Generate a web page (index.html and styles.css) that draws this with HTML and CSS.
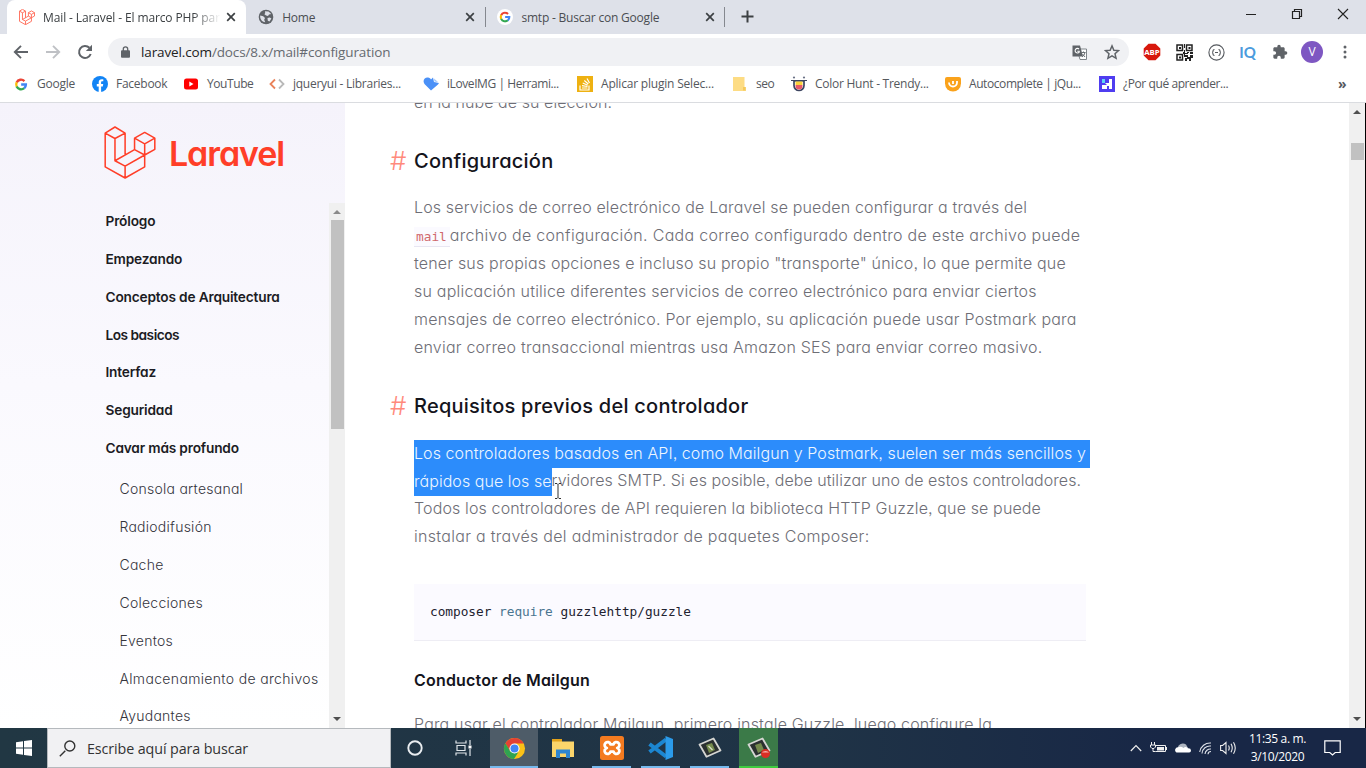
FILE: index.html
```html
<!DOCTYPE html>
<html lang="es">
<head>
<meta charset="utf-8">
<title>Mail - Laravel</title>
<link rel="stylesheet" href="styles.css">
</head>
<body>
<svg class="defs" width="0" height="0">
  <symbol id="g" viewBox="0 0 24 24"><path fill="none" stroke="#ea4335" stroke-width="4.4" d="M4 8.2A9 9 0 0 1 18.3 5.6"/><path fill="none" stroke="#fbbc05" stroke-width="4.4" d="M4.1 16a9 9 0 0 1 0-8"/><path fill="none" stroke="#34a853" stroke-width="4.4" d="M4 15.8a9 9 0 0 0 14 3"/><path fill="none" stroke="#4285f4" stroke-width="4.4" d="M12.3 12.1h8.8a9 9 0 0 1-3.2 6.8"/></symbol>
  <symbol id="lara" viewBox="43 49 153 157"><path fill="none" stroke="currentColor" stroke-linejoin="round" d="M75 52l30 18-30 16-29-16zM46 70v100l59 33 58-33v-35M75 86v66l30 16v35M105 70v65M75 152l58-33M105 168l58-33M163 68l30 17-30 17-30-17zM133 85v34l30 16 30-17V85M163 102v33"/></symbol>
  <symbol id="x" viewBox="0 0 10 10"><path stroke="#3c4043" stroke-width="1.7" d="M1.2 1.2l7.6 7.6M8.8 1.2L1.2 8.8"/></symbol>
</svg>
<div class="screen">
  <header class="tabs">
    <div class="tab active"><svg class="fav lara-fav"><use href="#lara"/></svg><span class="tt fade">Mail - Laravel - El marco PHP par</span><svg class="close"><use href="#x"/></svg></div>
    <div class="tab"><svg class="fav" viewBox="0 0 16 16"><circle cx="8" cy="8" r="7.300" fill="#5f6368"/><path fill="#dee1e9" d="M2.2 6.500l3 .8 1.800 1.800-.8 1.700 1 2.500C4 13 1.800 10 2.200 6.500zM7 2.300l3.500.3 2.700 2.400-2.200.4-1 1.600-1.900-.4-1.700-1.300.8-1.400zM9.500 9l2.300-.5 1.600 1.100-1.900 2.800-1.700-.6z"/></svg><span class="tt">Home</span><svg class="close"><use href="#x"/></svg></div>
    <div class="tab bar"><svg class="fav" viewBox="0 0 18 18"><circle cx="9" cy="9" r="9" fill="#fff"/><use href="#g" x="2.500" y="2.500" width="13" height="13"/></svg><span class="tt">smtp - Buscar con Google</span><svg class="close"><use href="#x"/></svg></div>
    <div class="newtab"><svg width="13" height="13" viewBox="0 0 13 13"><path stroke="#3c4043" stroke-width="2" d="M6.500 .5v12M.5 6.500h12"/></svg></div>
    <div class="winbtns">
      <svg width="12" height="12" viewBox="0 0 12 12"><path stroke="#222" d="M1 6.500h10"/></svg>
      <svg width="12" height="12" viewBox="0 0 12 12"><path fill="none" stroke="#222" stroke-width="1.200" d="M1.500 3.500h7v7h-7zM3.500 3.500v-2h7v7h-2"/></svg>
      <svg width="12" height="12" viewBox="0 0 12 12"><path stroke="#222" stroke-width="1.100" d="M1 1l10 10M11 1L1 11"/></svg>
    </div>
  </header>
  <div class="toolbar">
    <svg class="nav" viewBox="0 0 16 16"><path fill="none" stroke="#5f6368" stroke-width="1.900" d="M15 8H2M8 1.800L1.800 8 8 14.200"/></svg>
    <svg class="nav" viewBox="0 0 16 16"><path fill="none" stroke="#bfc1c5" stroke-width="1.900" d="M1 8h13M8 1.800L14.200 8 8 14.200"/></svg>
    <svg class="nav" viewBox="0 0 16 16"><path fill="none" stroke="#5f6368" stroke-width="2" d="M13.700 10A6 6 0 1 1 12.400 3.800"/><path fill="#5f6368" d="M15 .8v6.200H8.800z"/></svg>
    <div class="omni">
      <svg class="lock" viewBox="0 0 9 12"><path fill="none" stroke="#5f6368" stroke-width="1.300" d="M2.300 5V3a2.200 2.200 0 0 1 4.400 0v2"/><rect y="4.300" width="9" height="7.400" rx="1" fill="#5f6368"/></svg>
      <span class="url"><b>laravel.com</b>/docs/8.x/mail#configuration</span>
      <svg class="trans" viewBox="0 0 15 15"><path fill="#fff" stroke="#80868b" d="M5 4h9.500v10.500H8z"/><path fill="#5f6368" d="M.5 .5h7.500L11 11.500H.5z"/><path fill="none" stroke="#fff" stroke-width="1.100" d="M7 4a2.300 2.300 0 1 0 .2 3.200V6.200H5.300"/><path fill="none" stroke="#6b7075" d="M9.500 7.500h4M11.500 6.500v1M13 7.500q-.5 3-3 4.500M10.500 9l2.500 3"/></svg>
      <svg class="star" viewBox="0 0 24 24"><path fill="none" stroke="#5f6368" stroke-width="2.200" d="M12 2.800l2.800 6.500 7 .6-5.300 4.600 1.600 6.900L12 17.700l-6.100 3.700 1.600-6.900L2.200 9.900l7-.6z"/></svg>
    </div>
    <div class="exts">
      <svg width="18" height="18" viewBox="0 0 18 18"><path fill="#d8180d" d="M5.500 .7h7l4.800 4.800v7l-4.800 4.800h-7L.7 12.500v-7z"/><text x="9" y="12" font-size="7.800" font-weight="700" fill="#fff" text-anchor="middle">ABP</text></svg>
      <svg width="17" height="17" viewBox="0 0 17 17"><path fill="none" stroke="#222" stroke-width="1.500" d="M1 1h5.500v5.500H1zM10.500 1H16v5.500h-5.500zM1 10.500h5.500V16H1z"/><path fill="#222" d="M3 3h2v2H3zM12.500 3h2v2h-2zM3 12.500h2v2H3zM8 0h1v4H8zM8 6h1v3h3v1H9v3H8v-3H7V8h1zM11 8h2v1h-2zM14 8h3v2h-3zM9 11h3v2h2v-2h3v3h-2v3h-2v-2h-2v2H9v-3h2v-1H9z"/></svg>
      <svg width="17" height="17" viewBox="0 0 17 17"><circle cx="8.500" cy="8.500" r="7.600" fill="none" stroke="#55595e" stroke-width="1.100"/><path fill="none" stroke="#55595e" stroke-width="1.200" d="M6.500 5.500q-1.500 0-1.500 1.500T4 8.500q1 0 1 1.500t1.500 1.500M10.500 5.500q1.500 0 1.500 1.500t1 1.500q-1 0-1 1.500t-1.500 1.500M7 8.500h3"/></svg>
      <span class="iq">IQ</span>
      <svg width="16" height="16" viewBox="0 0 24 24"><path fill="#5f6368" d="M20.500 11H19V7c0-1.100-.9-2-2-2h-4V3.500a2.500 2.500 0 0 0-5 0V5H4c-1.100 0-2 .9-2 2v3.800h1.500a2.700 2.700 0 0 1 0 5.400H2V20c0 1.100.9 2 2 2h3.800v-1.500a2.700 2.700 0 0 1 5.400 0V22H17c1.100 0 2-.9 2-2v-4h1.500a2.500 2.500 0 0 0 0-5z"/></svg>
      <span class="avatar">V</span>
      <svg width="4" height="14" viewBox="0 0 4 14"><g fill="#5f6368"><circle cx="2" cy="2" r="1.500"/><circle cx="2" cy="7" r="1.500"/><circle cx="2" cy="12" r="1.500"/></g></svg>
    </div>
  </div>
  <nav class="marks">
    <a><svg viewBox="0 0 16 16"><use href="#g" x="1.500" y="2" width="13" height="13"/></svg>Google</a>
    <a><svg viewBox="0 0 16 16"><circle cx="8" cy="8" r="8" fill="#1284f5"/><path fill="#fff" d="M6.700 16v-5.500H4.800V8h1.900V6.300c0-2 1.200-3.100 3-3.100.8 0 1.600.1 1.600.1v2h-1c-.9 0-1.200.5-1.200 1.200V8h2.100l-.4 2.500H9.100V16z"/></svg>Facebook</a>
    <a class="t2"><svg viewBox="0 0 16 16"><rect x="1" y="2.500" width="14" height="11" rx="2.500" fill="#f00"/><path fill="#fff" d="M6.300 5.500v5L10.500 8z"/></svg>YouTube</a>
    <a><svg viewBox="0 0 16 16"><path fill="none" stroke="#e9825a" stroke-width="1.800" d="M6 3.500L1.500 8 6 12.500"/><path fill="none" stroke="#b9b9b9" stroke-width="1.800" d="M10 3.500L14.500 8 10 12.500"/></svg>jqueryui - Libraries...</a>
    <a class="t2"><svg viewBox="0 0 16 16"><path fill="#4a90f7" d="M8 14.500L1.500 8C-1 4.500 2 1 5 1.500c1.500.2 2.500 1 3 2L10 1.500l1 4.500 5 1-1 1.500z"/><path fill="#9dc4fb" d="M11 2.500l4 3.500-3.500-.5z"/></svg>iLoveIMG | Herrami...</a>
    <a class="t0"><svg viewBox="0 0 16 16"><path fill="#eeb111" d="M0 0h16v16H0z"/><path fill="none" stroke="#fff" stroke-width="1.200" d="M3 9.500V14h9V9.500M5 12h5.500M5 9.700l5.500.8M5.700 7l5 2.300M7.300 4.500l4 3.500M10 2.500l2.500 4.500"/></svg>Aplicar plugin Selec...</a>
    <a class="t2"><svg viewBox="0 0 16 16"><path fill="#fddc84" d="M1 1h11.500v10H14v4H1z"/><path fill="#f5c95b" d="M11 11h2.500v3.500H11z"/></svg>seo</a>
    <a><svg viewBox="0 0 16 16"><path fill="#fff" stroke="#3c4560" stroke-width="1.700" d="M3 5h10v4.500a5 5 0 0 1-10 0z"/><path fill="#fbd23b" d="M4.500 5.500h7V9h-7z"/><path fill="#e95a67" d="M4.500 9h7v1a3.500 3.500 0 0 1-7 0z"/><path stroke="#3c4560" d="M0 4.500h16"/><circle cx="3" cy="1.500" r="1.100" fill="#6a7186"/><circle cx="13" cy="1.500" r="1.100" fill="#6a7186"/></svg>Color Hunt - Trendy...</a>
    <a class="t2"><svg viewBox="0 0 16 16"><path fill="#faa21b" d="M2 1h12q2 0 2 2v4.500A8 8 0 0 1 0 7.500V3q0-2 2-2z"/><path fill="none" stroke="#fff" stroke-width="1.800" d="M4 6.500a4 4 0 0 0 8 0V5M8 8V5"/></svg>Autocomplete | jQu...</a>
    <a class="t2"><svg viewBox="0 0 16 16"><path fill="#4f3df0" d="M0 0h16v16H0z"/><path fill="#fff" d="M3 9h3v4H3zM6 7h4V3h3v10h-3v-3H8v3H6V9h2z"/><path fill="#5fd5f5" d="M3 3h3v4H3z"/></svg>¿Por qué aprender...</a>
    <b class="more">»</b>
  </nav>
  <main class="page">
    <aside class="side">
      <div class="brand"><svg class="logo"><use href="#lara"/></svg><span class="word">Laravel</span></div>
      <div class="toc">
        <ul>
          <li>Prólogo</li><li>Empezando</li><li>Conceptos de Arquitectura</li><li class="tight">Los basicos</li><li>Interfaz</li><li>Seguridad</li><li>Cavar más profundo
            <ul class="sub"><li>Consola artesanal</li><li>Radiodifusión</li><li>Cache</li><li>Colecciones</li><li>Eventos</li><li class="wide">Almacenamiento de archivos</li><li>Ayudantes</li></ul>
          </li>
        </ul>
        <div class="sb"><i class="up"></i><i class="thumb"></i><i class="down"></i></div>
      </div>
    </aside>
    <article class="doc">
      <p class="first">en la nube de su elección.</p>
      <h2><i>#</i>Configuración</h2>
      <p><span class="s15">Los servicios de correo electrónico de Laravel se pueden configurar a través del</span><br><code>mail</code><span class="s30">archivo de configuración. Cada correo configurado dentro de este archivo puede</span><br><span class="s18">tener sus propias opciones e incluso su propio "transporte" único, lo que permite que</span><br><span class="s21">su aplicación utilice diferentes servicios de correo electrónico para enviar ciertos</span><br><span class="s22">mensajes de correo electrónico. Por ejemplo, su aplicación puede usar Postmark para</span><br><span class="s21">enviar correo transaccional mientras usa Amazon SES para enviar correo masivo.</span></p>
      <h2><i>#</i>Requisitos previos del controlador</h2>
      <p><span class="sel full s08">Los controladores basados en API, como Mailgun y Postmark, suelen ser más sencillos y</span><br><span class="s05"><span class="sel">rápidos que los se</span>rvidores SMTP. Si es posible, debe utilizar uno de estos controladores.</span><br><span class="s13">Todos los controladores de API requieren la biblioteca HTTP Guzzle, que se puede</span><br><span class="s30">instalar a través del administrador de paquetes Composer:</span></p>
      <pre>composer <em>require</em> guzzlehttp/guzzle</pre>
      <h3>Conductor de Mailgun</h3>
      <p><span class="s18">Para usar el controlador Mailgun, primero instale Guzzle, luego configure la</span></p>
      <svg class="caret" width="8" height="16" viewBox="0 0 8 16"><path fill="none" stroke="#333" d="M1 .5h2l1 1 1-1h2M4 1.500v13M1 15.500h2l1-1 1 1h2"/></svg>
    </article>
    <div class="sb main"><i class="up"></i><i class="thumb"></i><i class="down"></i></div>
  </main>
  <footer class="task">
    <div class="start"><svg width="16" height="16" viewBox="0 0 16 16"><path fill="#fff" d="M0 2.200l7-1V7.500H0zM8 1l8-1v7.500H8zM0 8.500h7v6.300l-7-1zM8 8.500h8V16l-8-1.100z"/></svg></div>
    <div class="search"><svg width="17" height="17" viewBox="0 0 17 17"><path fill="none" stroke="#333" stroke-width="1.400" d="M.8 16.200l5.500-5.500M15.800 6a5 5 0 1 1-10 0 5 5 0 0 1 10 0z"/></svg>Escribe aquí para buscar</div>
    <div class="apps">
      <div><svg width="16" height="16" viewBox="0 0 16 16"><circle cx="8" cy="8" r="6.700" fill="none" stroke="#e9edf0" stroke-width="1.900"/></svg></div>
      <div><svg width="18" height="16" viewBox="0 0 18 16"><path fill="none" stroke="#dfe5e9" stroke-width="1.200" d="M1 .5V3h10V.5M2 5.500h8v5H2zM1 15.500V13h10v2.500M15 0v5M15 9v7"/><path fill="#fff" d="M13.500 5.500h3v3h-3z"/></svg></div>
      <div class="on cur"><svg width="23" height="23" viewBox="0 0 24 24"><circle cx="12" cy="12" r="11" fill="#fbc116"/><path fill="#e34133" d="M2.500 6.500A11 11 0 0 1 21.600 6.700H12L7 14.500z"/><path fill="#2fa351" d="M2.500 6.500l5 8.300L12 17l4-1-4.500 7A11 11 0 0 1 2.500 6.500z"/><circle cx="12" cy="12" r="5.300" fill="#fff"/><circle cx="12" cy="12" r="4.200" fill="#4285f4"/></svg></div>
      <div><svg width="22" height="19" viewBox="0 0 22 19"><path fill="#e3a21a" d="M0 0h10v4H0z"/><path fill="#fbd56b" d="M0 2.500h22V18H0z"/><path fill="#2f86d1" d="M4 10.500h14V19h-4v-4.500H8V19H4z"/></svg></div>
      <div class="on"><svg width="24" height="24" viewBox="0 0 24 24"><rect width="24" height="24" rx="2.500" fill="#f47b20"/><path fill="none" stroke="#fff" stroke-width="2.800" stroke-linejoin="round" d="M12 8.300H10.500A3 3 0 1 0 6.800 12a3 3 0 1 0 3.700 3.700h3A3 3 0 1 0 17.200 12a3 3 0 1 0-3.700-3.700z"/></svg></div>
      <div class="on"><svg width="25" height="24" viewBox="0 0 25 24"><path fill="none" stroke="#1c86d1" stroke-width="4" d="M1.500 8L18 20.500M1.500 16L18 3.500"/><path fill="#2b9bea" d="M17.500 0L25 3v18l-7.500 3z"/></svg></div>
      <div class="on"><svg width="24" height="22" viewBox="0 0 24 22"><path fill="#2b3030" stroke="#d6d6d3" stroke-width="1.800" stroke-linejoin="round" d="M1.500 7.500L15.500 1.500 22.500 13.500 8.500 19.800z"/><path fill="#758a4d" d="M8 8l6-2 3 7-6 3z"/><path stroke="#dbe2c8" stroke-width="1.300" d="M10.500 9l4 4"/></svg></div>
      <div class="on rec"><svg width="24" height="22" viewBox="0 0 24 22"><path fill="#2b3030" stroke="#d6d6d3" stroke-width="1.800" stroke-linejoin="round" d="M1.500 7.500L15.500 1.500 22.500 13.500 8.500 19.800z"/><path fill="#758a4d" d="M8 8l6-2 3 7-6 3z"/><circle cx="18.500" cy="16.500" r="4.500" fill="#d92d24"/><path fill="#f5b5ae" d="M15 15.500a4 3 0 0 1 7 0z"/></svg></div>
    </div>
    <div class="tray">
      <svg width="12" height="8" viewBox="0 0 12 8"><path fill="none" stroke="#eee" stroke-width="1.200" d="M.8 7L6 1.500 11.200 7"/></svg>
      <svg width="17" height="12" viewBox="0 0 17 12"><path fill="none" stroke="#eee" d="M5.500 3.500h10v6h-10M1.500 0v3M4.500 0v3M.5 3h5v2L4 6.500H2L.5 5zM3 6.500v3h2.500M16.500 5v3"/><path fill="#eee" d="M7 5h7v3.500H7z"/></svg>
      <svg width="16" height="10" viewBox="0 0 16 10"><path fill="#aeb5c0" d="M3 6a5 4.500 0 0 1 8-4.500L13 5z"/><path fill="#fff" d="M1.500 9.500a2.800 2.800 0 0 1 1.700-5.200Q6 3 8.500 5q2-2 4.500.3 3-.2 3 2.200T13.500 9.500z"/></svg>
      <svg width="13" height="13" viewBox="0 0 13 13"><path fill="none" stroke="#dfe3ea" stroke-width="1.100" d="M.7 10A10.500 10.500 0 0 1 12 1M3 11.500A8 8 0 0 1 12 4M6 12a5.500 5.500 0 0 1 6-5M9 12.300a3 3 0 0 1 3-2.800"/></svg>
      <svg width="17" height="14" viewBox="0 0 17 14"><path fill="none" stroke="#eee" stroke-width="1.100" d="M.6 4.500h2L6 1.500v11L2.600 9.500h-2zM8.500 4.500q1.500 2.500 0 5M11 2.800q2.500 4.200 0 8.400M13.500 1.200q3.500 5.800 0 11.600"/></svg>
      <div class="clock"><span>11:35 a. m.</span><span>3/10/2020</span></div>
      <svg width="17" height="16" viewBox="0 0 17 16"><path fill="none" stroke="#fff" stroke-width="1.200" d="M.8 .8h15.400v11.700h-5L8.500 15l-2.700-2.500h-5z"/></svg>
    </div>
  </footer>
</div>
</body>
</html>
```
FILE: styles.css
```css
* { box-sizing: border-box; }
body { margin: 0; font-family: "Open Sans", "Noto Sans", sans-serif; background: #fff; }
.defs { position: absolute; }
svg { display: block; flex: none; }
.screen { width: 1366px; height: 768px; overflow: hidden; display: flex; flex-direction: column; position: relative; }

/* tab strip */
.tabs { height: 34px; flex: none; background: #dee1e9; display: flex; padding-left: 7px; }
.tab { width: 239.200px; display: flex; align-items: center; padding: 0 10px 0 12px; font-size: 12px; color: #4a4d52; position: relative; letter-spacing: -.2px; }
.tab.active { background: #fff; border-radius: 8px 8px 0 0; color: #3c4043; letter-spacing: -.12px; }
.tab.bar::before, .tab.bar::after { content: ""; width: 1px; height: 20px; background: #85888f; position: absolute; left: 0; top: 7px; }
.tab.bar::after { left: auto; right: 0; }
.fav { width: 16px; height: 16px; margin-right: 8px; }
.lara-fav { color: #ff6a57; stroke-width: 9; }
.tt { flex: 1; white-space: nowrap; overflow: hidden; }
.fade { -webkit-mask-image: linear-gradient(90deg, #000 82%, transparent 97%); mask-image: linear-gradient(90deg, #000 82%, transparent 97%); }
.close { width: 10px; height: 10px; }
.newtab { padding: 10px 0 0 16px; }
.winbtns { margin-left: auto; display: flex; gap: 34px; padding: 8px 17px 0 0; }

/* toolbar */
.toolbar { height: 35px; flex: none; display: flex; align-items: center; padding: 1px 0 0 13px; }
.nav { width: 16px; height: 16px; margin-right: 16px; }
.omni { width: 1021px; height: 28px; border-radius: 14px; background: #f0f1f4; display: flex; align-items: center; padding: 0 9px 0 13px; margin-left: -1px; }
.lock { width: 9px; height: 12px; margin-right: 11px; }
.url { flex: 1; font-size: 13.500px; letter-spacing: -.13px; color: #666a70; white-space: nowrap; }
.url b { font-weight: 400; color: #222; }
.trans { width: 15px; height: 15px; margin-right: 17px; }
.star { width: 16px; height: 16px; }
.exts { display: grid; grid-template-columns: 32px 32px 32px 32px 32px 32px 34px; flex: 1; justify-items: center; align-items: center; padding-left: 7px; }
.iq { font: 700 15px Lato, sans-serif; color: #4b9bdd; margin-left: -1px; }
.avatar { width: 22px; height: 22px; border-radius: 50%; background: #7e57c2; color: #fff; font-size: 12px; line-height: 22px; text-align: center; }

/* bookmarks */
.marks { height: 34px; flex: none; border-bottom: 1px solid #dadce0; display: grid; grid-template-columns: 79px 91px 86px 154px 154px 155px 59px 154px 154px 239px auto; padding-left: 13px; align-items: center; padding-bottom: 4px; }
.marks a { display: flex; align-items: center; gap: 8px; font-size: 12px; color: #55585d; white-space: nowrap; letter-spacing: -.26px; }
.marks .t2 { letter-spacing: -.42px; }
.marks .t0 { letter-spacing: -.2px; }
.marks svg { width: 16px; height: 16px; }
.more { font-size: 14px; color: #55585d; }

/* page */
.page { height: 625px; flex: none; display: flex; overflow: hidden; font-family: Inter, sans-serif; font-feature-settings: "cv11", "ss03"; }
.side { width: 345px; flex: none; background: linear-gradient(#f5f3fb, #faf9fe 45%, #fff); padding-top: 23px; display: flex; flex-direction: column; }
.brand { height: 77px; flex: none; display: flex; padding-left: 104px; color: #ff3e28; }
.logo { width: 52px; height: 53px; stroke-width: 4.500; margin-right: 13px; }
.word { font-size: 34px; font-weight: 600; line-height: 55px; letter-spacing: -1.100px; }
.toc { flex: 1; display: flex; min-height: 0; }
.toc ul { list-style: none; margin: 0; padding: 0; }
.toc > ul { width: 329px; padding-left: 105.500px; font-size: 13.700px; font-weight: 600; letter-spacing: -.18px; color: #1c1c24; line-height: 37.860px; white-space: nowrap; }
.toc .tight { letter-spacing: -.5px; }
.toc .sub { font-weight: 300; font-size: 14px; letter-spacing: .25px; color: #34343c; padding: 2.300px 0 0 14px; }
.toc .wide { letter-spacing: .34px; }
.sb { width: 16px; background: #f0f0f0; display: flex; flex-direction: column; align-items: center; padding: 7px 0; }
.sb i { border: 4px solid transparent; }
.sb .up { border-top: 0; border-bottom: 4px solid #8a8a8a; }
.sb .down { border-bottom: 0; border-top: 4px solid #4f4f4f; margin-top: auto; }
.sb .thumb { border: 0; width: 13px; height: 209px; background: #c1c1c1; margin-top: 6px; }
.main { margin-left: auto; border-right: 1px solid #000; width: 17px; }
.main .thumb { height: 17px; margin-top: 29px; }
.main .up { border-bottom-color: #4f4f4f; }

.doc { padding-left: 69px; width: 820px; color: #6e6e76; font-size: 16px; font-weight: 300; position: relative; white-space: nowrap; }
.doc p { margin: 0; line-height: 28px; }
.doc .first { margin-top: -15px; letter-spacing: .07px; }
h2 { font-size: 20px; font-weight: 500; letter-spacing: .24px; line-height: 28px; margin: 31px 0 18px -24px; color: #14141c; display: flex; }
h2 i { font-style: normal; width: 24px; font-size: 26px; letter-spacing: 0; font-weight: 300; color: #ff8a7c; }
.doc code { font: 12.800px "DejaVu Sans Mono", monospace; color: #d0686c; background: #fbfaff; border-bottom: 1px solid #e8e6f2; padding: 2px 3px 2px 2px; }
.s05 { letter-spacing: .05px; }
.s08 { letter-spacing: .08px; }
.s13 { letter-spacing: .13px; }
.s15 { letter-spacing: .15px; }
.s18 { letter-spacing: .18px; }
.s21 { letter-spacing: .21px; }
.s22 { letter-spacing: .22px; }
.s30 { letter-spacing: .3px; }
.sel { background: #2c8cfb; color: #eef6ff; padding: 2.500px 0 6px; }
.full { padding-right: 4px; }
pre { margin: 34px 0 0; width: 672px; height: 57px; background: #fbfaff; border-bottom: 1px solid #eeedf4; padding-left: 16px; font: 12.800px/55px "DejaVu Sans Mono", monospace; letter-spacing: -.03px; color: #222230; }
pre em { font-style: normal; color: #4a7590; }
h3 { margin: 24px 0 15px; font-size: 16px; font-weight: 600; letter-spacing: .19px; line-height: 30px; color: #14141c; }
.caret { position: absolute; left: 209px; top: 380px; }

/* taskbar */
.task { height: 40px; flex: none; display: flex; background: linear-gradient(90deg, #213743, #1f3346 60%, #182746 85%); color: #fff; }
.start { width: 47px; display: flex; align-items: center; justify-content: center; }
.search { width: 344px; background: #f1f1f3; border: 1px solid #b5b9bd; display: flex; align-items: center; gap: 11px; padding-left: 11px; font-size: 14.300px; letter-spacing: -.1px; color: #333; }
.apps { display: grid; grid-template-columns: 48px 49px 50px repeat(5, 49px); }
.apps div { display: flex; align-items: center; justify-content: center; position: relative; }
.on::after { content: ""; position: absolute; left: 5px; right: 5px; bottom: 0; height: 2px; background: #76b9ed; }
.apps .cur { background: #4e5c68; margin: 0 0 0 2px; }
.cur::after { left: 0; right: 0; }
.rec { background: linear-gradient(90deg, transparent 5px, #3b7a48 5px, #3b7a48 44px, transparent 44px); }
.rec::after { background: #3fcb3f; }
.tray { margin-left: auto; display: flex; align-items: center; gap: 8px; padding-right: 25px; }
.tray > svg:first-child { margin-left: -3px; }
.clock { display: flex; flex-direction: column; align-items: center; font-size: 12px; line-height: 18px; width: 71px; padding-right: 6px; letter-spacing: -.36px; }
```
